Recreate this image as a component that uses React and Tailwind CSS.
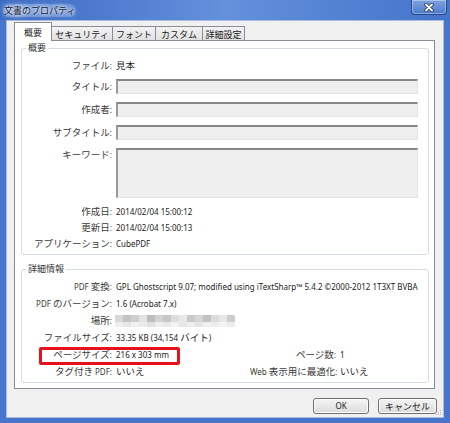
import React from 'react';

const LAT = "[font-family:'Noto_Sans',sans-serif] text-[8px]";

// ASCII runs get the small latin face, the rest stays in the CJK face
const Mixed = ({ text }) => {
  const parts = text.split(/([\x20-\x7E©™]+)/);
  return parts.map((p, i) => {
    if (p === '') return null;
    if (/^[\x20-\x7E©™]+$/.test(p)) return <span key={i} className={LAT}>{p}</span>;
    return <span key={i}>{p}</span>;
  });
};

const Label = ({ text, w = 'w-[90px]' }) => (
  <div className={`${w} shrink-0 text-right whitespace-pre text-[9.5px] leading-none text-[#3a3a3a]`}>
    <Mixed text={text} />
  </div>
);

const Value = ({ text }) => (
  <div className="ml-[4px] whitespace-pre text-[9.5px] leading-none text-[#222]">
    <Mixed text={text} />
  </div>
);

const Field = ({ h = 'h-[15px]' }) => (
  <div className={`ml-[4px] w-[302px] ${h} bg-[#efefef] border-t-2 border-l-2 border-t-[#878787] border-l-[#9a9a9a] border-r border-b border-r-[#e4e4e4] border-b-[#e4e4e4]`} />
);

const mosaicTop = [
  'bg-[#d9d9d9]', 'bg-[#c4c4c4]', 'bg-[#cfcfcf]', 'bg-[#e4e4e4]', 'bg-[#bdbdbd]', 'bg-[#d2d2d2]', 'bg-[#c8c8c8]', 'bg-[#dedede]',
  'bg-[#e8e8e8]', 'bg-[#cacaca]', 'bg-[#d6d6d6]', 'bg-[#c2c2c2]', 'bg-[#dcdcdc]', 'bg-[#e6e6e6]', 'bg-[#cdcdcd]',
];
const mosaicBottom = [
  'bg-[#eeeeee]', 'bg-[#e6e6e6]', 'bg-[#f1f1f1]', 'bg-[#ebebeb]', 'bg-[#e2e2e2]', 'bg-[#efefef]', 'bg-[#e9e9e9]', 'bg-[#f2f2f2]',
  'bg-[#e7e7e7]', 'bg-[#eeeeee]', 'bg-[#e4e4e4]', 'bg-[#f0f0f0]', 'bg-[#ebebeb]', 'bg-[#f3f3f3]', 'bg-[#ececec]',
];

const Group = ({ title, className, children }) => (
  <div className={`relative ml-[6px] w-[408px] border border-[#d5dce3] rounded-[3px] ${className}`}>
    <span className="absolute -top-[7px] left-[4px] bg-white px-[2px] text-[9px] leading-[12px] text-[#333]">{title}</span>
    {children}
  </div>
);

const tabBase = 'flex items-center justify-center text-[9px] leading-none text-[#222]';

export default function App() {
  return (
    <div className="w-[450px] h-[423px] overflow-hidden flex flex-col bg-[#4675cb] [font-family:'Noto_Sans_CJK_JP',sans-serif]">
      {/* title bar */}
      <div className="h-[20px] shrink-0 flex justify-between bg-gradient-to-r from-[#3c6ac4] via-[#6490dc] to-[#4474ca]">
        <div className="ml-[3px] mt-[4px] h-[13px] px-[1px] rounded-full bg-[#9cb9e8]/40 text-[9px] leading-[13px] text-[#10203a] [text-shadow:0_0_3px_#fff,0_0_5px_#fff,0_0_8px_#fff]">
          文書のプロパティ
        </div>
        <div className="mr-[3px] w-[36px] h-[15px] rounded-b-[4px] border border-t-0 border-[#27488a] bg-gradient-to-b from-[#7fa3e0] to-[#4d7acc] shadow-[inset_0_0_0_1px_rgba(255,255,255,0.35)] flex items-center justify-center">
          <svg width="10" height="9" viewBox="0 0 10 9">
            <path d="M2 1.5 L8 7.5 M8 1.5 L2 7.5" stroke="#22334f" strokeWidth="3.4" strokeLinecap="round" />
            <path d="M2 1.5 L8 7.5 M8 1.5 L2 7.5" stroke="#ffffff" strokeWidth="1.8" strokeLinecap="round" />
          </svg>
        </div>
      </div>

      {/* client area */}
      <div className="relative mx-[6px] h-[398px] shrink-0 bg-[#f0f0f0] border border-[#a9bddf] flex flex-col">
        {/* tabs */}
        <div className="h-[19px] shrink-0 flex items-end pl-[7px]">
          <div className={`${tabBase} relative z-10 -mb-px w-[38px] h-[19px] bg-white border border-b-0 border-[#898c95]`}>概要</div>
          <div className={`${tabBase} w-[61px] h-[14px] pt-[1px] bg-gradient-to-b from-[#f3f3f3] to-[#e1e1e1] border-t border-r border-[#898c95]`}>セキュリティ</div>
          <div className={`${tabBase} w-[43px] h-[14px] pt-[1px] bg-gradient-to-b from-[#f3f3f3] to-[#e1e1e1] border-t border-r border-[#898c95]`}>フォント</div>
          <div className={`${tabBase} w-[47px] h-[14px] pt-[1px] bg-gradient-to-b from-[#f3f3f3] to-[#e1e1e1] border-t border-r border-[#898c95]`}>カスタム</div>
          <div className={`${tabBase} w-[42px] h-[14px] pt-[1px] bg-gradient-to-b from-[#f3f3f3] to-[#e1e1e1] border-t border-r border-[#898c95]`}>詳細設定</div>
        </div>

        {/* tab panel */}
        <div className="ml-[7px] w-[421px] h-[349px] shrink-0 bg-white border border-[#898c95] flex flex-col">
          <Group title="概要" className="mt-[7px] pt-[10px] pb-[2px]">
            <div className="h-[14px] flex items-center">
              <Label text="ファイル:" />
              <Value text="見本" />
            </div>
            <div className="mt-[6px] h-[15px] flex items-center">
              <Label text="タイトル:" />
              <Field />
            </div>
            <div className="mt-[8px] h-[15px] flex items-center">
              <Label text="作成者:" />
              <Field />
            </div>
            <div className="mt-[8px] h-[15px] flex items-center">
              <Label text="サブタイトル:" />
              <Field />
            </div>
            <div className="mt-[8px] h-[50px] flex items-start">
              <div className="pt-[2px]">
                <Label text="キーワード:" />
              </div>
              <Field h="h-[50px]" />
            </div>
            <div className="mt-[6px] h-[16px] flex items-center">
              <Label text="作成日:" />
              <Value text="2014/02/04 15:00:12" />
            </div>
            <div className="h-[16px] flex items-center">
              <Label text="更新日:" />
              <Value text="2014/02/04 15:00:13" />
            </div>
            <div className="h-[16px] flex items-center">
              <Label text="アプリケーション:" />
              <Value text="CubePDF" />
            </div>
          </Group>

          <Group title="詳細情報" className="mt-[14px] pt-[8px] pb-[2px]">
            <div className="h-[17px] flex items-center">
              <Label text="PDF 変換:" />
              <Value text="GPL Ghostscript 9.07; modified using iTextSharp™ 5.4.2 ©2000-2012 1T3XT BVBA" />
            </div>
            <div className="h-[17px] flex items-center">
              <Label text="PDF のバージョン:" />
              <Value text="1.6 (Acrobat 7.x)" />
            </div>
            <div className="h-[17px] flex items-center">
              <Label text="場所:" />
              <div className="ml-[3px] flex flex-col">
                <div className="flex">
                  {mosaicTop.map((c, i) => (
                    <div key={i} className={`w-[8px] h-[7px] ${c}`} />
                  ))}
                </div>
                <div className="flex">
                  {mosaicBottom.map((c, i) => (
                    <div key={i} className={`w-[8px] h-[5px] ${c}`} />
                  ))}
                </div>
              </div>
            </div>
            <div className="h-[17px] flex items-center">
              <Label text="ファイルサイズ:" />
              <Value text="33.35 KB (34,154 バイト)" />
            </div>
            <div className="relative h-[17px] flex items-center">
              <Label text="ページサイズ:" />
              <div className="w-[138px]">
                <Value text="216 x 303 mm" />
              </div>
              <Label text="ページ数:" w="w-[86px]" />
              <Value text="1" />
              <div className="absolute left-[17px] top-[1px] w-[141px] h-[18px] border-[3px] border-[#e8101a] rounded-[2px]" />
            </div>
            <div className="h-[17px] flex items-center">
              <Label text="タグ付き PDF:" />
              <div className="w-[138px]">
                <Value text="いいえ" />
              </div>
              <Label text="Web 表示用に最適化:" w="w-[86px]" />
              <Value text="いいえ" />
            </div>
          </Group>
        </div>

        {/* buttons */}
        <div className="flex justify-end gap-[9px] pt-[9px] pr-[6px]">
          <button className="w-[56px] h-[16px] rounded-[3px] border border-[#707070] bg-gradient-to-b from-[#f4f4f4] to-[#dcdcdc] shadow-[inset_0_0_0_1px_#fcfcfc] flex items-center justify-center text-[#222]">
            <span className={LAT}>OK</span>
          </button>
          <button className="w-[59px] h-[16px] rounded-[3px] border border-[#707070] bg-gradient-to-b from-[#f4f4f4] to-[#dcdcdc] shadow-[inset_0_0_0_1px_#fcfcfc] flex items-center justify-center text-[9px] leading-none text-[#222]">
            キャンセル
          </button>
        </div>

        {/* size grip */}
        <svg className="absolute right-[1px] bottom-[1px]" width="7" height="7" viewBox="0 0 7 7">
          <rect x="5" y="1" width="1" height="1" fill="#b5b5b5" />
          <rect x="3" y="3" width="1" height="1" fill="#b5b5b5" />
          <rect x="5" y="3" width="1" height="1" fill="#b5b5b5" />
          <rect x="1" y="5" width="1" height="1" fill="#b5b5b5" />
          <rect x="3" y="5" width="1" height="1" fill="#b5b5b5" />
          <rect x="5" y="5" width="1" height="1" fill="#b5b5b5" />
        </svg>
      </div>
    </div>
  );
}
